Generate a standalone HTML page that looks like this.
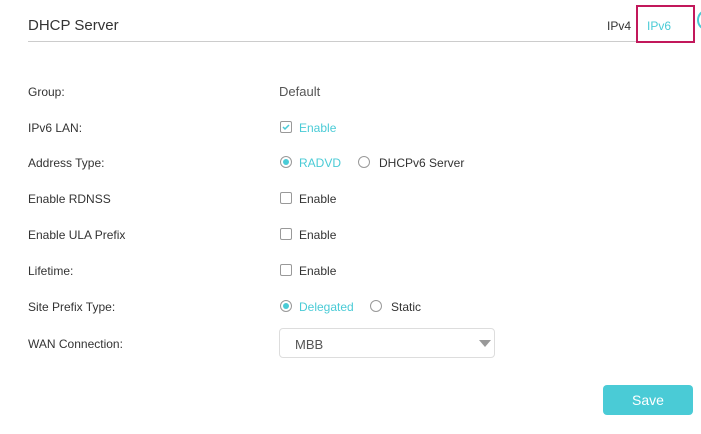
<!DOCTYPE html><html><head><style>
body{margin:0;width:701px;height:434px;background:#fff;font-family:"Liberation Sans",sans-serif;position:relative;overflow:hidden}
.a{position:absolute;white-space:nowrap}
.l{left:28px;font-size:12px;color:#333;line-height:14px}
.v{font-size:12px;line-height:14px}
.t{color:#4acbd6}
.cb{position:absolute;width:10px;height:10px;border:1px solid #999;border-radius:2px;background:#fff}
.rd{position:absolute;width:10px;height:10px;border:1px solid #999;border-radius:50%;background:#fff}
.rd.on::after{content:"";position:absolute;left:2px;top:2px;width:6px;height:6px;border-radius:50%;background:#4acbd6}
</style></head><body>
<div class="a" style="left:28px;top:17px;font-size:15px;color:#333">DHCP Server</div>
<div class="a" style="left:28px;top:41px;width:608px;height:1px;background:#ccc"></div>
<div class="a" style="left:607px;top:19px;font-size:12px;color:#333">IPv4</div>
<div class="a" style="left:637px;top:20px;width:1px;height:12px;background:#4acbd6"></div>
<div class="a" style="left:636px;top:5px;width:55px;height:34px;border:2px solid #c2185b"></div>
<div class="a t" style="left:647px;top:19px;font-size:12px">IPv6</div>
<div class="a" style="left:697px;top:10px;width:14px;height:16px;border:2px solid #4acbd6;border-radius:50%"></div>

<div class="a l" style="top:85px">Group:</div>
<div class="a v" style="left:279px;top:85px;color:#555;font-size:13px">Default</div>

<div class="a l" style="top:121px">IPv6 LAN:</div>
<div class="cb" style="left:280px;top:121px"><svg width="10" height="10" style="position:absolute;left:0;top:0"><path d="M2 5l2 2 4-4" stroke="#4acbd6" stroke-width="1.5" fill="none"/></svg></div>
<div class="a v t" style="left:299px;top:121px">Enable</div>

<div class="a l" style="top:156px">Address Type:</div>
<div class="rd on" style="left:280px;top:156px"></div>
<div class="a v t" style="left:299px;top:156px">RADVD</div>
<div class="rd" style="left:358px;top:156px"></div>
<div class="a v" style="left:379px;top:156px;color:#333">DHCPv6 Server</div>

<div class="a l" style="top:192px">Enable RDNSS</div>
<div class="cb" style="left:280px;top:192px"></div>
<div class="a v" style="left:299px;top:192px;color:#333">Enable</div>

<div class="a l" style="top:228px">Enable ULA Prefix</div>
<div class="cb" style="left:280px;top:228px"></div>
<div class="a v" style="left:299px;top:228px;color:#333">Enable</div>

<div class="a l" style="top:264px">Lifetime:</div>
<div class="cb" style="left:280px;top:264px"></div>
<div class="a v" style="left:299px;top:264px;color:#333">Enable</div>

<div class="a l" style="top:300px">Site Prefix Type:</div>
<div class="rd on" style="left:280px;top:300px"></div>
<div class="a v t" style="left:299px;top:300px">Delegated</div>
<div class="rd" style="left:370px;top:300px"></div>
<div class="a v" style="left:391px;top:300px;color:#333">Static</div>

<div class="a l" style="top:337px">WAN Connection:</div>
<div class="a" style="left:279px;top:328px;width:214px;height:28px;border:1px solid #ddd;border-radius:4px"></div>
<div class="a" style="left:295px;top:337px;font-size:13px;color:#555">MBB</div>
<div class="a" style="left:479px;top:340px;width:0;height:0;border-left:6px solid transparent;border-right:6px solid transparent;border-top:7px solid #999"></div>

<div class="a" style="left:603px;top:385px;width:90px;height:30px;background:#4acbd6;border-radius:4px;color:#fff;font-size:14px;text-align:center;line-height:30px">Save</div>
</body></html>
